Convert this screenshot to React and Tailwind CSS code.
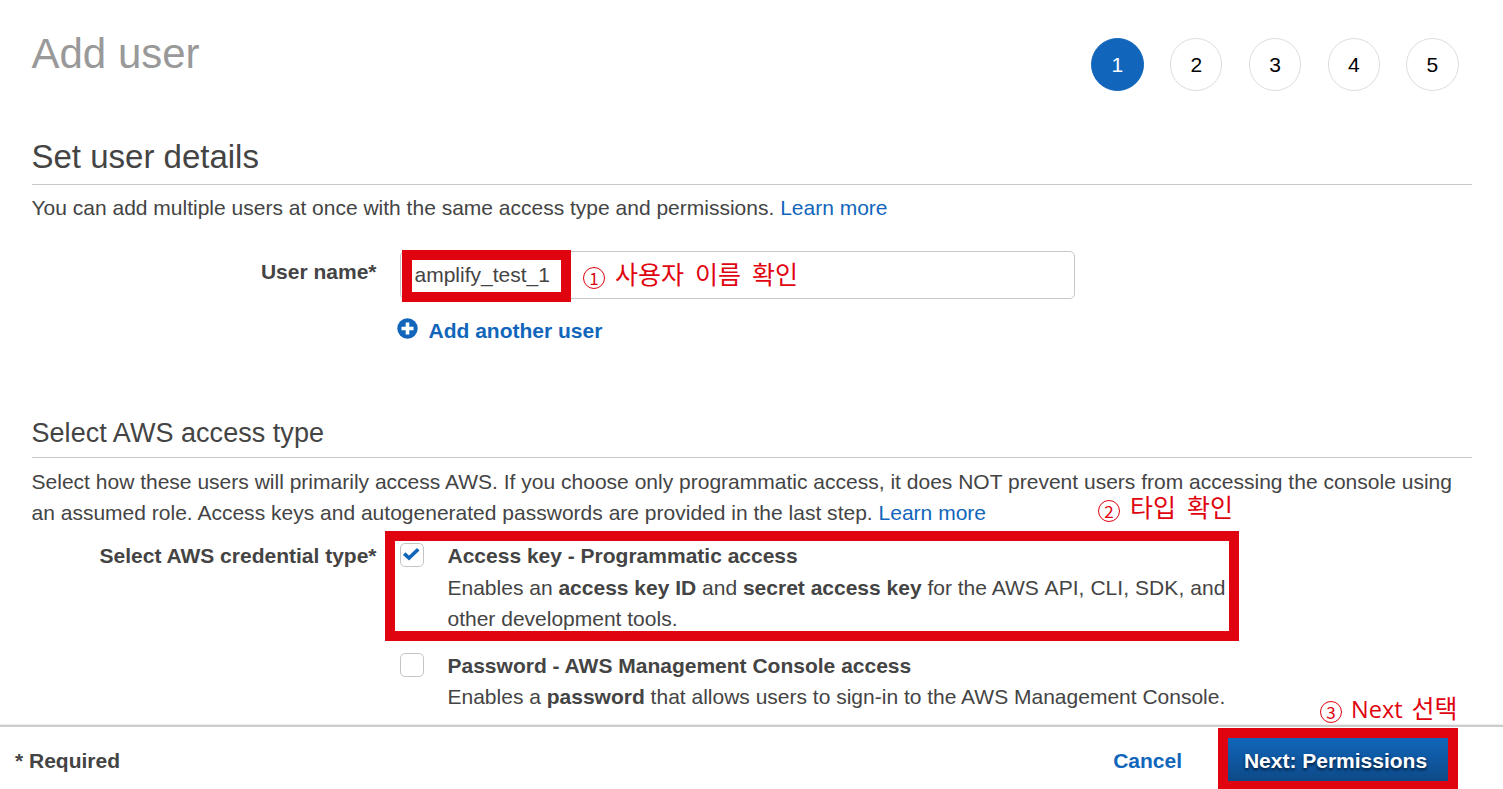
const STEPS = [1, 2, 3, 4, 5];

function Stepper() {
  return (
    <ol className="flex gap-[26.5px] pt-[38px] text-black">
      {STEPS.map((n) => (
        <li
          key={n}
          className={
            n === 1
              ? "flex h-[53px] w-[53px] items-center justify-center rounded-full border border-[#1166bb] bg-[#1166bb] text-white"
              : "flex h-[53px] w-[52.2px] items-center justify-center rounded-full border border-[#dddddd]"
          }
        >
          {n}
        </li>
      ))}
    </ol>
  );
}

function Checkbox({ checked }) {
  return (
    <span className="mt-[3px] flex h-6 w-6 shrink-0 justify-center rounded-[5px] border border-[#c4c4c4] bg-white">
      {checked && (
        <svg width="22" height="22" viewBox="0 0 22 22" fill="none">
          <path d="M3.2 9.7 8 14 17.3 5.2" stroke="#1166bb" strokeWidth="3.6" />
        </svg>
      )}
    </span>
  );
}

function Note({ mark, className, children }) {
  return (
    <div
      className={
        "absolute flex items-start whitespace-nowrap font-['Open_Sans','Noto_Sans_CJK_KR',sans-serif] text-[25px] leading-[30px] [word-spacing:4.5px] text-[#df040f] " +
        className
      }
    >
      <span className="mr-[10px] mt-[8px] flex h-[22px] w-[22px] items-center justify-center rounded-full border border-[#df040f] pb-px font-['Noto_Sans_CJK_KR',sans-serif] text-[17px] leading-none">
        {mark}
      </span>
      <span>{children}</span>
    </div>
  );
}

function Link({ children }) {
  return <a className="text-[#1166bb]">{children}</a>;
}

export default function App() {
  return (
    <div className="relative flex h-[789px] w-[1503px] flex-col overflow-hidden bg-white font-['Liberation_Sans',Arial,sans-serif] text-[21px] leading-[31.5px] text-[#444444]">
      <main className="flex h-[725px] flex-col pl-[31.5px] pr-[31px]">
        <header className="flex h-[136px] justify-between pr-[13.5px]">
          <h1 className="pt-[29px] text-[42px] leading-[50px] text-[#999999]">Add user</h1>
          <Stepper />
        </header>

        <section className="h-[276px]">
          <h2 className="h-[49px] border-b border-[#c8c8c8] text-[33px] leading-[42px]">Set user details</h2>
          <p className="pt-[7px]">
            You can add multiple users at once with the same access type and permissions. <Link>Learn more</Link>
          </p>
          <div className="mt-[27px] flex">
            <label className="w-[345px] pt-[5px] text-right font-bold">User name*</label>
            <div className="ml-[23px]">
              <div className="relative flex h-12 w-[675px] items-center rounded-[5px] border border-[#c8c8c8] pl-[14px]">
                amplify_test_1
                <div className="absolute -top-[2px] left-px h-[52px] w-[169px] border-[10px] border-[#df040f]" />
                <Note mark="1" className="left-[182.5px] top-[7px]">
                  사용자 이름 확인
                </Note>
              </div>
              <div className="mt-4 flex font-bold text-[#1166bb]">
                <svg className="-ml-[3px] mr-[11px] mt-[3px]" width="21" height="21" viewBox="0 0 21 21">
                  <circle cx="10.5" cy="10.5" r="10.2" fill="#1166bb" />
                  <path d="M10.5 4.5v12M4.5 10.5h12" stroke="white" strokeWidth="3.6" />
                </svg>
                <span>Add another user</span>
              </div>
            </div>
          </div>
        </section>

        <section>
          <h3 className="h-[46px] border-b border-[#c8c8c8] text-[27px] leading-[43px] tracking-[0.04px]">
            Select AWS access type
          </h3>
          <p className="whitespace-nowrap pt-2 leading-[31px] tracking-[0.008px]">
            Select how these users will primarily access AWS. If you choose only programmatic access, it does NOT
            prevent users from accessing the console using
            <br />
            an assumed role. Access keys and autogenerated passwords are provided in the last step.{" "}
            <Link>Learn more</Link>
          </p>
          <div className="mt-3 flex">
            <div className="w-[345px] text-right font-bold">Select AWS credential type*</div>
            <div className="ml-[23px] flex flex-col gap-[15px]">
              <div className="relative flex gap-6">
                <Checkbox checked />
                <div className="whitespace-nowrap">
                  <b>Access key - Programmatic access</b>
                  <br />
                  Enables an <b>access key ID</b> and <b>secret access key</b> for the AWS{" "}
                  <span className="tracking-[0.06px]">API, CLI, SDK, and</span>
                  <br />
                  other development tools.
                </div>
                <div className="absolute -left-[15px] -top-[9px] h-[110px] w-[854px] border-[10px] border-[#df040f]" />
                <Note mark="2" className="left-[698.5px] -top-[48px]">
                  타입 확인
                </Note>
              </div>
              <div className="flex gap-6">
                <Checkbox />
                <div className="whitespace-nowrap">
                  <b>Password - AWS Management Console access</b>
                  <br />
                  Enables a <b>password</b> that allows users to sign-in to the AWS Management Console.
                </div>
              </div>
            </div>
          </div>
        </section>
      </main>

      <footer className="relative flex h-16 items-start justify-between border-t-2 border-[#cccccc] bg-white pl-[15px] pr-[55px] font-bold shadow-[0_-1px_1px_#eeeeee]">
        <span className="pt-[18px]">* Required</span>
        <div className="flex">
          <a className="pr-[46px] pt-[18px] text-[#1166bb]">Cancel</a>
          <button className="mt-[11px] flex h-[43px] w-[220px] items-center justify-center bg-linear-to-b from-[#1166bb] to-[#0d4a88] pr-[5px] pt-[2px] font-bold text-white [text-shadow:0_2px_3px_#001b3a]">
            Next: Permissions
          </button>
        </div>
        <div className="absolute left-[1218px] top-px h-[61px] w-[240px] border-[10px] border-b-8 border-[#df040f]" />
        <Note mark="3" className="left-[1320px] -top-[34px] font-normal">
          <span className="-ml-px mr-[-2px] text-[23.5px]">Next</span> 선택
        </Note>
      </footer>
    </div>
  );
}
